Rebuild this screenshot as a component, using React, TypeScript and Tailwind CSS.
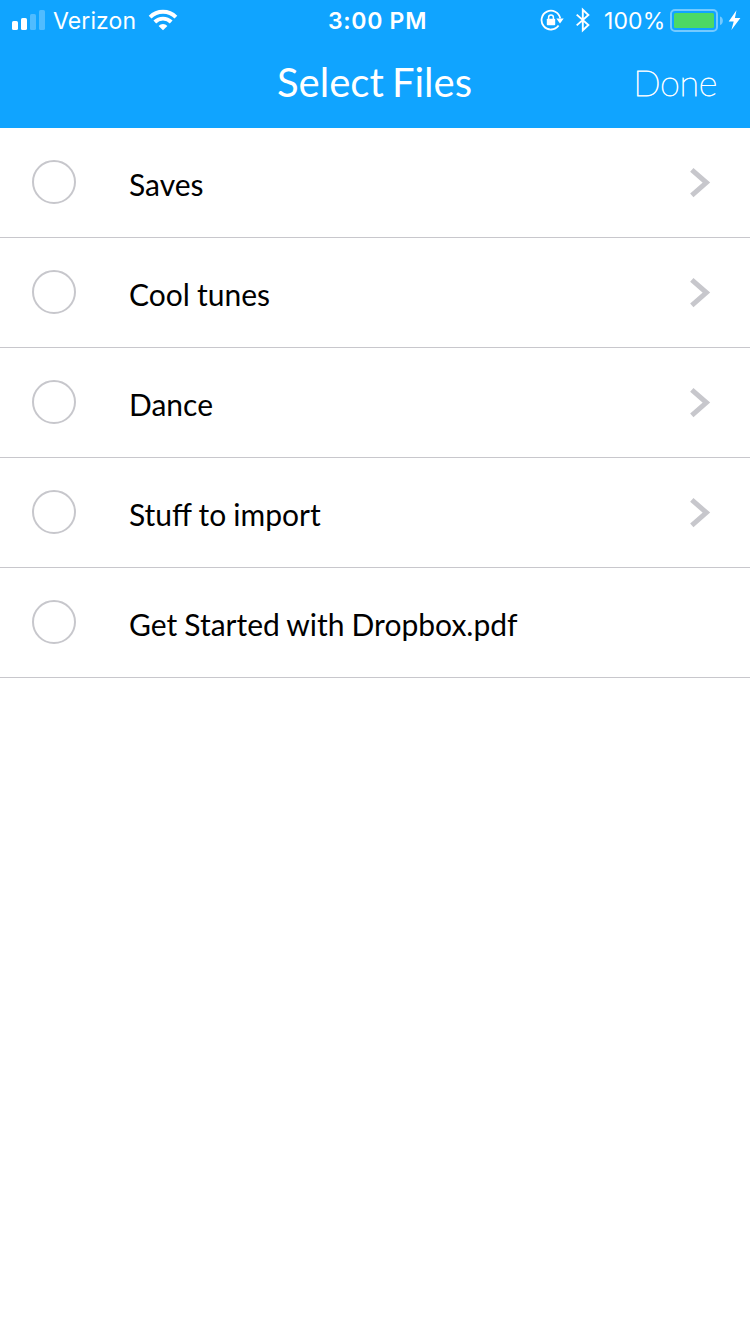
import React from "react";

const files: { name: string; folder: boolean }[] = [
  { name: "Saves", folder: true },
  { name: "Cool tunes", folder: true },
  { name: "Dance", folder: true },
  { name: "Stuff to import", folder: true },
  { name: "Get Started with Dropbox.pdf", folder: false },
];

function SignalIcon() {
  return (
    <svg className="block h-10 w-[33px] shrink-0" viewBox="12 0 33 40" fill="white">
      <rect x="12" y="21" width="6" height="9" rx="1.6" />
      <rect x="21" y="18" width="6" height="12" rx="1.6" />
      <rect x="30" y="14" width="6" height="16" rx="1.6" opacity="0.27" />
      <rect x="39" y="10" width="6" height="20" rx="1.6" opacity="0.27" />
    </svg>
  );
}

function WifiIcon() {
  return (
    <svg className="block h-10 w-[30px] shrink-0" viewBox="148 0 30 40" fill="none" stroke="white" strokeWidth="3.9">
      <path d="M150.1 17.1a18.2 18.2 0 0 1 25.8 0" />
      <path d="M154.8 22a11.6 11.6 0 0 1 16.4 0" />
      <path d="M163 30.3l-4.4-4.4a6.2 6.2 0 0 1 8.8 0z" fill="white" stroke="none" />
    </svg>
  );
}

function RotationLockIcon() {
  return (
    <svg className="block h-10 w-6 shrink-0" viewBox="540 0 24 40" fill="none" stroke="white">
      <path d="M558.6 25.6a9.4 9.4 0 1 1 1.6-7.2" strokeWidth="1.8" />
      <path d="M556.3 18.6h7.4l-3.7 4.8z" fill="white" stroke="none" />
      <rect x="546.8" y="18.8" width="8.4" height="6.4" rx="0.8" fill="white" stroke="none" />
      <path d="M548.6 19.5v-2.2a2.4 2.4 0 0 1 4.8 0v2.2" strokeWidth="1.5" />
    </svg>
  );
}

function BluetoothIcon() {
  return (
    <svg className="block h-10 w-[16px] shrink-0" viewBox="575 0 16 40" fill="none" stroke="white" strokeWidth="1.9">
      <path d="M576.7 14.6l11.7 10.4-5.6 5.2V9.8l5.6 5.2-11.7 10.4" />
    </svg>
  );
}

function BatteryIcon() {
  return (
    <svg className="block h-10 w-[54px] shrink-0" viewBox="669 0 54 40" fill="none">
      <rect x="671" y="10" width="46" height="21" rx="4" stroke="white" strokeOpacity="0.42" strokeWidth="2" />
      <rect x="674" y="13" width="40" height="15" rx="1.6" fill="#4cd964" />
      <path d="M720 16.5c3.8 1 3.8 7.5 0 8.5z" fill="white" opacity="0.42" />
    </svg>
  );
}

function ChargingIcon() {
  return (
    <svg className="block h-10 w-[14px] shrink-0" viewBox="728 0 14 40" fill="white">
      <path d="M736.5 10.3l-7.8 11.2h5l-2.3 8.5 9-12.1h-5.5z" />
    </svg>
  );
}

function Chevron() {
  return (
    <svg className="block h-8 w-6 shrink-0" viewBox="0 0 24 32" fill="none" stroke="#c7c7cc" strokeWidth="5">
      <path d="M3.8 2.8L18.4 15.6L3.8 28.4" />
    </svg>
  );
}

function StatusBar() {
  return (
    <div className="grid h-10 grid-cols-[328px_1fr_210px] font-['Inter',sans-serif] text-[23px] leading-[42px] text-white">
      <div className="flex pl-3">
        <SignalIcon />
        <span className="ml-2 w-[95px] tracking-[0.1px] whitespace-nowrap">Verizon</span>
        <WifiIcon />
      </div>
      <span className="text-[23px] font-semibold tracking-[0.7px] whitespace-nowrap">3:00 PM</span>
      <div className="flex">
        <RotationLockIcon />
        <span className="w-[11px]" />
        <BluetoothIcon />
        <span className="ml-[13px] w-[65px] tracking-[0.1px] whitespace-nowrap">100%</span>
        <BatteryIcon />
        <span className="w-[5px]" />
        <ChargingIcon />
      </div>
    </div>
  );
}

export default function App() {
  return (
    <main className="min-h-[1334px] w-[750px] bg-white font-['Lato',sans-serif]">
      <header className="h-32 bg-[#10a4ff] text-white">
        <StatusBar />
        <div className="grid h-[88px] grid-cols-[1fr_300px_1fr] items-center">
          <span />
          <h1 className="pr-px pb-[5px] text-center text-[40px] leading-[48px] [word-spacing:-2px] whitespace-nowrap">Select Files</h1>
          <button className="pr-[33px] pb-1 text-right text-[36px] leading-[44px] font-thin tracking-[-0.3px] [-webkit-text-stroke:0.8px_white]">Done</button>
        </div>
      </header>
      <ul>
        {files.map((file) => (
          <li key={file.name} className="flex h-[110px] items-center border-b border-[#c8c7cc] pr-[38px] pl-8">
            <span className="mb-px size-11 shrink-0 rounded-full border-2 border-[#c7c7cc]" />
            <span className="ml-[53px] flex-1 pt-[3px] text-[30px] leading-9 [word-spacing:-0.6px] text-black">{file.name}</span>
            {file.folder && <Chevron />}
          </li>
        ))}
      </ul>
    </main>
  );
}
